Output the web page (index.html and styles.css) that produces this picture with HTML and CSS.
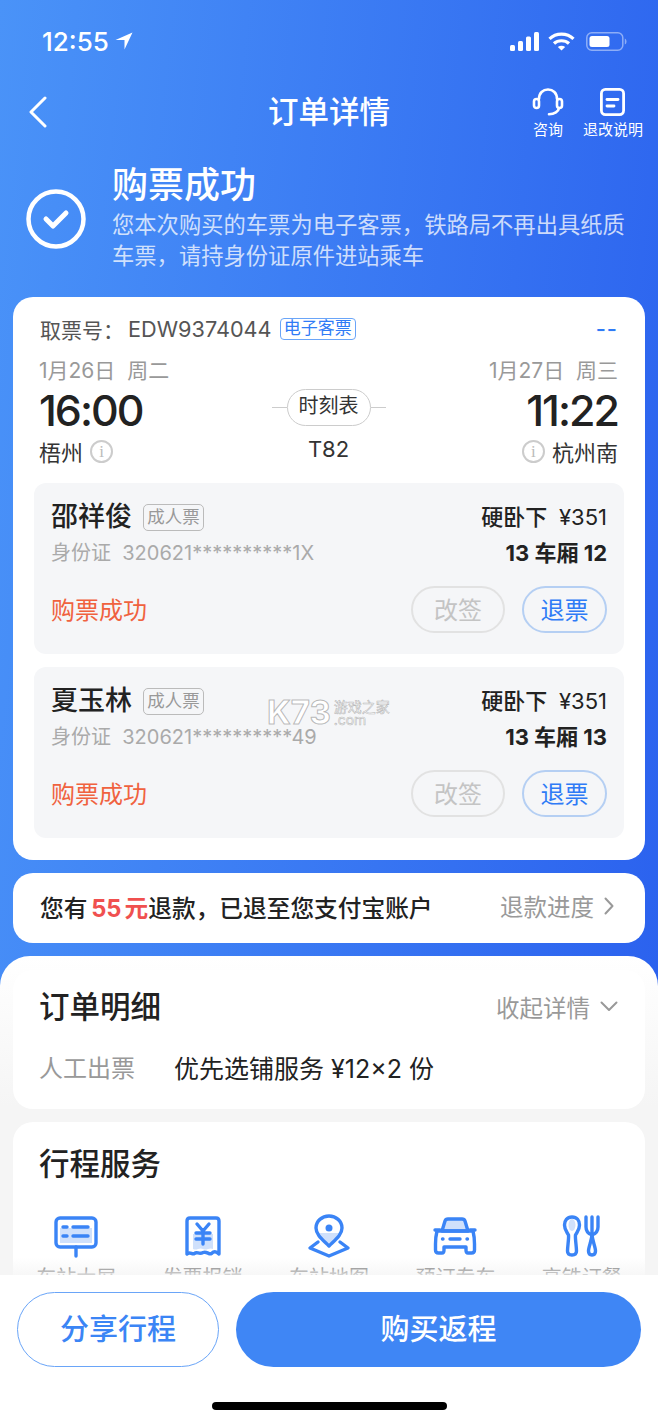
FILE: index.html
```html
<!DOCTYPE html>
<html lang="zh">
<head>
    <meta charset="utf-8">
    <title>订单详情</title>
    <link rel="stylesheet" href="styles.css">
</head>
<body>
<div class="page">
    <div class="content">
        <div class="status-bar">
            <div class="clock">
                <span>12:55</span>
                <svg width="18" height="18" viewBox="0 0 18 18"><path d="M17.5 .5 L.5 8 H9.500 V17.500 Z" fill="#fff"/></svg>
            </div>
            <div class="status-icons">
                <svg width="29" height="19" viewBox="0 0 29 19" fill="#fff">
                    <rect x="0" y="13" width="5" height="6" rx="1.5"/>
                    <rect x="8" y="9" width="5" height="10" rx="1.5"/>
                    <rect x="16" y="4.500" width="5" height="14.500" rx="1.5"/>
                    <rect x="24" y="0" width="5" height="19" rx="1.5"/>
                </svg>
                <svg width="27" height="19" viewBox="0 0 27 19" fill="none" stroke="#fff" stroke-width="3.200">
                    <path d="M1.500 6.800 C8 .5 19 .5 25.500 6.800"/>
                    <path d="M6 11.500 C10 7.800 17 7.800 21 11.500"/>
                    <path d="M13.500 18.500 L9.800 14.900 C12 13.300 15 13.300 17.200 14.900 Z" fill="#fff" stroke="none"/>
                </svg>
                <svg class="battery" width="41" height="19" viewBox="0 0 41 19">
                    <rect x=".8" y=".8" width="36" height="17.400" rx="5" fill="none" stroke="#fff" stroke-opacity=".45" stroke-width="1.500"/>
                    <rect x="3.500" y="4" width="20" height="11" rx="2.500" fill="#fff"/>
                    <path d="M38.800 6.500 C40 7 40.500 8 40.500 9.500 C40.500 11 40 12 38.800 12.500 Z" fill="#fff" fill-opacity=".45"/>
                </svg>
            </div>
        </div>

        <div class="nav">
            <svg class="back" width="20" height="32" viewBox="0 0 20 32" fill="none" stroke="#fff" stroke-width="3" stroke-linecap="round" stroke-linejoin="round"><path d="M17 2 L3 16 L17 30"/></svg>
            <div class="nav-title">订单详情</div>
            <div class="nav-actions">
                <div class="nav-action">
                    <svg width="32" height="28" viewBox="0 0 32 28" fill="none" stroke="#fff" stroke-width="2.600" stroke-linecap="round" stroke-linejoin="round">
                        <path d="M7 11 C7 5 11 1.500 16 1.500 C21 1.500 25 5 25 11"/>
                        <rect x="2" y="11" width="5" height="9" rx="2.500"/>
                        <rect x="25" y="11" width="5" height="9" rx="2.500"/>
                        <path d="M27 20 C26.500 23.500 22.500 26.300 17 26.300"/>
                    </svg>
                    <span>咨询</span>
                </div>
                <div class="nav-action">
                    <svg width="25" height="28" viewBox="0 0 25 28" fill="none" stroke="#fff" stroke-width="2.800" stroke-linecap="round">
                        <rect x="1.400" y="1.400" width="22.200" height="25.200" rx="4"/>
                        <path d="M7 11.500 H18"/>
                        <path d="M7 18 H14"/>
                    </svg>
                    <span>退改说明</span>
                </div>
            </div>
        </div>

        <div class="hero">
            <svg class="hero-check" width="60" height="60" viewBox="0 0 60 60" fill="none" stroke="#fff" stroke-linecap="round" stroke-linejoin="round">
                <circle cx="30" cy="30" r="27.500" stroke-width="4.500"/>
                <path d="M20 30 L27 37 L40 24" stroke-width="5"/>
            </svg>
            <div class="hero-text">
                <div class="hero-title">购票成功</div>
                <div class="hero-desc">您本次购买的车票为电子客票，铁路局不再出具纸质车票，请持身份证原件进站乘车</div>
            </div>
        </div>

        <div class="card ticket-card">
            <div class="ticket-head">
                <div class="ticket-no">
                    <span>取票号：</span><span class="ticket-code">EDW9374044</span>
                    <span class="tag-blue">电子客票</span>
                </div>
                <span class="dash">--</span>
            </div>

            <div class="trip">
                <div class="trip-side">
                    <div class="trip-date">1月26日&nbsp; 周二</div>
                    <div class="trip-time">16:00</div>
                    <div class="trip-station">梧州<i class="info">i</i></div>
                </div>
                <div class="trip-mid">
                    <div class="timetable-row">
                        <span class="line"></span>
                        <span class="timetable">时刻表</span>
                        <span class="line"></span>
                    </div>
                    <div class="train-no">T82</div>
                </div>
                <div class="trip-side right">
                    <div class="trip-date">1月27日&nbsp; 周三</div>
                    <div class="trip-time">11:22</div>
                    <div class="trip-station"><i class="info">i</i>杭州南</div>
                </div>
            </div>

            <div class="passenger">
                <div class="p-row">
                    <div class="p-name-wrap"><span class="p-name">邵祥俊</span><span class="tag-gray">成人票</span></div>
                    <div class="p-seat">硬卧下&nbsp; <span class="p-price">¥351</span></div>
                </div>
                <div class="p-row p-row-id">
                    <div class="p-id">身份证&nbsp; 320621**********1X</div>
                    <div class="p-car">13 车厢 12</div>
                </div>
                <div class="p-row p-actions">
                    <span class="p-status">购票成功</span>
                    <div class="p-buttons">
                        <button class="pill-btn change">改签</button>
                        <button class="pill-btn refund">退票</button>
                    </div>
                </div>
            </div>

            <div class="passenger">
                <div class="watermark">
                    <span class="wm-logo">K73</span>
                    <span class="wm-side"><span>游戏之家</span><span>.com</span></span>
                </div>
                <div class="p-row">
                    <div class="p-name-wrap"><span class="p-name">夏玉林</span><span class="tag-gray">成人票</span></div>
                    <div class="p-seat">硬卧下&nbsp; <span class="p-price">¥351</span></div>
                </div>
                <div class="p-row p-row-id">
                    <div class="p-id">身份证&nbsp; 320621**********49</div>
                    <div class="p-car">13 车厢 13</div>
                </div>
                <div class="p-row p-actions">
                    <span class="p-status">购票成功</span>
                    <div class="p-buttons">
                        <button class="pill-btn change">改签</button>
                        <button class="pill-btn refund">退票</button>
                    </div>
                </div>
            </div>
        </div>

        <div class="card refund-card">
            <div class="refund-text">您有 <b>55 元</b>退款，已退至您支付宝账户</div>
            <div class="more">退款进度
                <svg width="10" height="18" viewBox="0 0 10 18" fill="none" stroke="#999" stroke-width="2" stroke-linecap="round" stroke-linejoin="round"><path d="M1.500 1.500 L8.500 9 L1.500 16.500"/></svg>
            </div>
        </div>

        <div class="panel">
            <div class="card detail-card">
                <div class="section-head">
                    <div class="section-title">订单明细</div>
                    <div class="more">收起详情
                        <svg width="18" height="11" viewBox="0 0 18 11" fill="none" stroke="#999" stroke-width="2" stroke-linecap="round" stroke-linejoin="round"><path d="M1.500 1.500 L9 9 L16.500 1.500"/></svg>
                    </div>
                </div>
                <div class="detail-row">
                    <span class="detail-label">人工出票</span>
                    <span class="detail-value">优先选铺服务 ¥12×2 份</span>
                </div>
            </div>

            <div class="card service-card">
                <div class="section-title">行程服务</div>
                <div class="services">
                    <div class="service">
                        <svg width="44" height="44" viewBox="0 0 44 44" fill="none" stroke="#3a84f6" stroke-width="3.400" stroke-linecap="round" stroke-linejoin="round">
                            <rect x="6" y="14" width="32" height="15" fill="#cfe0fb" stroke="none"/>
                            <rect x="2" y="4" width="40" height="29" rx="4"/>
                            <path d="M22 33 V42"/>
                            <path d="M9 13 H13 M19 13 H34 M9 22 H13 M19 22 H34"/>
                        </svg>
                        <span>车站大屏</span>
                    </div>
                    <div class="service">
                        <svg width="44" height="44" viewBox="0 0 44 44" fill="none" stroke="#3a84f6" stroke-width="3.400" stroke-linecap="round" stroke-linejoin="round">
                            <path d="M12 20 H32 V35 C28 33 26 37 22 35 C18 33 16 37 12 35 Z" fill="#cfe0fb" stroke="none"/>
                            <path d="M6 40 V7 C6 5 7 4 9 4 H35 C37 4 38 5 38 7 V40 C35 37 33 37 30.500 39.500 C28 41 26 37 22 38.500 C18 41 16 37 13.500 39.500 C11 41 9 37 6 40 Z"/>
                            <path d="M16 10 L22 17 L28 10 M22 17 V30 M15 19 H29 M15 25 H29"/>
                        </svg>
                        <span>发票报销</span>
                    </div>
                    <div class="service">
                        <svg width="44" height="44" viewBox="0 0 44 44" fill="none" stroke="#3a84f6" stroke-width="3.400" stroke-linecap="round" stroke-linejoin="round">
                            <path d="M12 19 H32 C30 24 26 28 22 32 C18 28 14 24 12 19 Z" fill="#cfe0fb" stroke="none"/>
                            <path d="M22 32 C16 26 9 21 9 14 C9 7 15 2 22 2 C29 2 35 7 35 14 C35 21 28 26 22 32 Z"/>
                            <circle cx="22" cy="14" r="3.500" fill="#3a84f6" stroke="none"/>
                            <path d="M11 28 L3 34 L22 42 L41 34 L33 28"/>
                        </svg>
                        <span>车站地图</span>
                    </div>
                    <div class="service">
                        <svg width="44" height="44" viewBox="0 0 44 44" fill="none" stroke="#3a84f6" stroke-width="3.400" stroke-linecap="round" stroke-linejoin="round">
                            <path d="M9 17 L12 7 C12.500 5.500 14 5 15 5 H29 C30 5 31.500 5.500 32 7 L35 17 Z" fill="#cfe0fb"/>
                            <path d="M2 16 H7 M37 16 H42"/>
                            <path d="M4 17 H40 C41 21 41.500 24 41.500 30 V36 C41.500 38 40 39 38.500 39 H35 C33.500 39 33 38 33 36 V33 H11 V36 C11 38 10.500 39 9 39 H5.500 C4 39 2.500 38 2.500 36 V30 C2.500 24 3 21 4 17 Z"/>
                            <path d="M9.500 25 H10 M34 25 H34.500 M17 25 H27"/>
                        </svg>
                        <span>预订专车</span>
                    </div>
                    <div class="service">
                        <svg width="44" height="44" viewBox="0 0 44 44" fill="none" stroke="#3a84f6" stroke-width="3.400" stroke-linecap="round" stroke-linejoin="round">
                            <ellipse cx="12" cy="11" rx="3.500" ry="6" fill="#cfe0fb" stroke="none"/>
                            <path d="M12 3 C17 3 19.500 6.500 19.500 11 C19.500 16 17 18 15.500 21 C15 24 16.500 33 16.500 37 C16.500 40 14.500 41 12 41 C9.500 41 7.500 40 7.500 37 C7.500 33 9 24 8.500 21 C7 18 4.500 16 4.500 11 C4.500 6.500 7 3 12 3 Z"/>
                            <path d="M26 3 V13 C26 18 29 20 32 21 C35 20 38 18 38 13 V3 M32 3 V21"/>
                            <path d="M32 21 C32.500 27 35.500 33 35.500 37 C35.500 40 34 41 32 41 C30 41 28.500 40 28.500 37 C28.500 33 31.500 27 32 21 Z"/>
                        </svg>
                        <span>高铁订餐</span>
                    </div>
                </div>
            </div>
        </div>
    </div>

    <div class="bottom-bar">
        <div class="bottom-buttons">
            <button class="share-btn">分享行程</button>
            <button class="buy-btn">购买返程</button>
        </div>
        <div class="home-bar"></div>
    </div>
</div>
</body>
</html>
```

FILE: styles.css
```css
* {
    box-sizing: border-box;
}

body {
    margin: 0;
    font-family: Inter, "Noto Sans CJK SC", sans-serif;
    color: #222;
    background: #fff;
}

.page {
    display: flex;
    flex-direction: column;
    height: 1424px;
    overflow: hidden;
}

.content {
    flex: 1;
    min-height: 0;
    overflow: hidden;
    background: linear-gradient(96deg, #4a93f8, #2a60ee);
}

.status-bar {
    display: flex;
    justify-content: space-between;
    height: 80px;
    padding: 26px 31px 0 42px;
}

.clock {
    display: flex;
    align-items: center;
    gap: 6px;
    height: 30px;
    font-size: 26px;
    font-weight: 500;
    color: #fff;
}

.status-icons {
    display: flex;
    align-items: center;
    gap: 9px;
    height: 30px;
}

.status-icons .battery {
    margin-left: 2px;
}

.nav {
    display: grid;
    grid-template-columns: minmax(0, 1fr) auto minmax(0, 1fr);
    align-items: center;
    height: 60px;
    padding: 0 15px;
    color: #fff;
}

.back {
    margin-left: 13px;
}

.nav-title {
    font-size: 30.500px;
    font-weight: 500;
    line-height: 40px;
}

.nav-actions {
    display: flex;
    justify-content: flex-end;
    gap: 19px;
    align-self: start;
    margin-top: 8px;
}

.nav-action {
    display: flex;
    flex-direction: column;
    align-items: center;
    font-size: 15px;
    line-height: 28px;
    white-space: nowrap;
}

.hero {
    display: flex;
    gap: 26px;
    padding: 22px 28px 0 26px;
    margin-bottom: 25px;
    color: #fff;
}

.hero-check {
    flex: none;
    margin-top: 27px;
}

.hero-title {
    font-size: 36px;
    font-weight: 500;
    line-height: 46px;
}

.hero-desc {
    margin-top: 1px;
    padding-bottom: 1px;
    font-size: 22.300px;
    line-height: 31px;
    color: rgba(255, 255, 255, 0.75);
}

.card {
    background: #fff;
    border-radius: 20px;
}

.ticket-card,
.refund-card {
    margin: 0 13px;
}

.ticket-card {
    padding: 19px 21px 22px;
}

.ticket-head {
    display: flex;
    justify-content: space-between;
    align-items: center;
    height: 26px;
    padding: 0 6px;
    font-size: 21px;
    color: #555;
}

.ticket-no {
    display: flex;
    align-items: center;
}

.ticket-code {
    margin-left: 4px;
    font-size: 21.700px;
}

.tag-blue {
    margin-left: 8px;
    padding: 0 3px;
    height: 22px;
    font-size: 17px;
    line-height: 19px;
    color: #2f7bf6;
    border: 1px solid #6aa5f8;
    border-radius: 4px;
}

.dash {
    color: #2f7bf6;
    font-size: 22px;
    font-weight: 500;
    letter-spacing: 1px;
}

.trip {
    display: grid;
    grid-template-columns: 1fr auto 1fr;
    margin-top: 16px;
    padding: 0 6px 0 5px;
}

.trip-side.right {
    text-align: right;
}

.trip-date {
    font-size: 21px;
    line-height: 26px;
    color: #999;
}

.trip-time {
    font-size: 43px;
    font-weight: 500;
    line-height: 52px;
    letter-spacing: -2px;
}

.trip-station {
    display: flex;
    align-items: center;
    gap: 7px;
    height: 30px;
    font-size: 22px;
    color: #333;
}

.trip-side.right .trip-station {
    justify-content: flex-end;
}

.info {
    flex: none;
    width: 23px;
    height: 23px;
    border: 2px solid #ccc;
    border-radius: 50%;
    font-family: "Liberation Serif", serif;
    font-style: normal;
    font-size: 17px;
    line-height: 19px;
    text-align: center;
    color: #bbb;
}

.trip-mid {
    display: flex;
    flex-direction: column;
    align-items: center;
    padding-top: 31px;
}

.timetable-row {
    display: flex;
    align-items: center;
}

.line {
    width: 15px;
    height: 1px;
    background: #ccc;
}

.timetable {
    width: 84px;
    height: 37px;
    font-size: 20px;
    line-height: 33px;
    text-align: center;
    color: #333;
    border: 1px solid #ccc;
    border-radius: 19px;
}

.train-no {
    margin-top: 9px;
    font-size: 22px;
    line-height: 28px;
    color: #333;
}

.passenger {
    position: relative;
    margin-top: 17px;
    padding: 17px 17px 21px;
    background: #f5f6f8;
    border-radius: 12px;
}

.passenger + .passenger {
    margin-top: 13px;
}

.p-row {
    display: flex;
    justify-content: space-between;
    align-items: center;
}

.p-name-wrap {
    display: flex;
    align-items: center;
    gap: 11px;
}

.p-name {
    font-size: 27px;
    font-weight: 500;
    line-height: 34px;
}

.tag-gray {
    width: 61px;
    height: 27px;
    font-size: 17.500px;
    line-height: 24px;
    text-align: center;
    color: #999;
    border: 1px solid #bbb;
    border-radius: 5px;
}

.p-seat {
    font-size: 22px;
    font-weight: 500;
    line-height: 34px;
}

.p-price {
    font-weight: 400;
}

.p-seat,
.p-car {
    white-space: nowrap;
}

.p-row-id {
    margin-top: 5px;
}

.p-id {
    font-size: 20px;
    line-height: 28px;
    color: #aaa;
}

.p-car {
    font-size: 22px;
    font-weight: 700;
    line-height: 28px;
}

.p-actions {
    margin-top: 19px;
}

.p-status {
    padding-bottom: 3px;
    font-size: 24px;
    color: #f0623f;
}

.p-buttons {
    display: flex;
    gap: 17px;
}

.pill-btn {
    height: 47px;
    padding: 0 0 3px;
    font: inherit;
    font-size: 24px;
    background: none;
    border-radius: 24px;
}

.pill-btn.change {
    width: 94px;
    color: #c4c4c4;
    border: 2px solid #e2e2e2;
}

.pill-btn.refund {
    width: 85px;
    color: #2f7bf6;
    border: 2px solid #b5cff3;
}

.watermark {
    position: absolute;
    top: 33px;
    left: 233px;
    display: flex;
    gap: 3px;
    color: #fff;
    -webkit-text-stroke: 1px rgba(140, 140, 140, 0.6);
}

.wm-logo {
    font-size: 33px;
    font-weight: 700;
    line-height: 25px;
}

.wm-side {
    display: flex;
    flex-direction: column;
    font-size: 14px;
    line-height: 13px;
    -webkit-text-stroke-width: 0.6px;
}

.refund-card {
    display: flex;
    justify-content: space-between;
    align-items: center;
    height: 70px;
    margin-top: 13px;
    padding: 0 31px 3px 27px;
}

.refund-text {
    font-size: 23.700px;
    font-weight: 500;
    word-spacing: -2.500px;
}

.refund-text b {
    font-weight: 700;
    color: #f0504f;
}

.more {
    display: flex;
    align-items: center;
    gap: 10px;
    padding-bottom: 1px;
    font-size: 23.500px;
    color: #999;
}

.panel {
    margin-top: 13px;
    padding: 14px 13px 0;
    background: linear-gradient(#fff, #f5f5f5 150px);
    border-radius: 30px 30px 0 0;
}

.detail-card {
    padding: 16px 27px 23px 26px;
}

.section-head {
    display: flex;
    justify-content: space-between;
    align-items: center;
}

.section-title {
    font-size: 30.500px;
    font-weight: 500;
    line-height: 42px;
}

.detail-row {
    display: flex;
    align-items: center;
    gap: 39px;
    margin-top: 24px;
    font-size: 24px;
    line-height: 34px;
}

.detail-label {
    color: #999;
}

.detail-value {
    font-size: 25px;
}

.service-card {
    margin-top: 13px;
    padding: 21px 0 30px;
}

.service-card .section-title {
    padding-left: 26px;
}

.services {
    display: grid;
    grid-template-columns: repeat(5, 1fr);
    margin-top: 29px;
}

.service {
    display: flex;
    flex-direction: column;
    align-items: center;
    gap: 6px;
    font-size: 20px;
    line-height: 28px;
    color: #555;
}

.bottom-bar {
    position: relative;
    flex: none;
    height: 149px;
    padding: 17px 17px 0;
    background: #fff;
}

.bottom-bar::before {
    content: "";
    position: absolute;
    left: 0;
    right: 0;
    top: -17px;
    height: 17px;
    background: linear-gradient(rgba(245, 245, 245, 0), rgba(245, 245, 245, 0.8));
}

.bottom-buttons {
    display: flex;
    gap: 17px;
}

.share-btn,
.buy-btn {
    height: 75px;
    padding: 0 0 5px;
    font: inherit;
    font-size: 29px;
    font-weight: 500;
    border-radius: 38px;
}

.share-btn {
    width: 202px;
    color: #3b85f5;
    background: #fff;
    border: 1px solid #6aa5f8;
}

.buy-btn {
    flex: 1;
    color: #fff;
    background: #3f86f5;
    border: 0;
}

.home-bar {
    width: 235px;
    height: 8px;
    margin: 35px auto 0;
    background: #000;
    border-radius: 4px;
}
```
